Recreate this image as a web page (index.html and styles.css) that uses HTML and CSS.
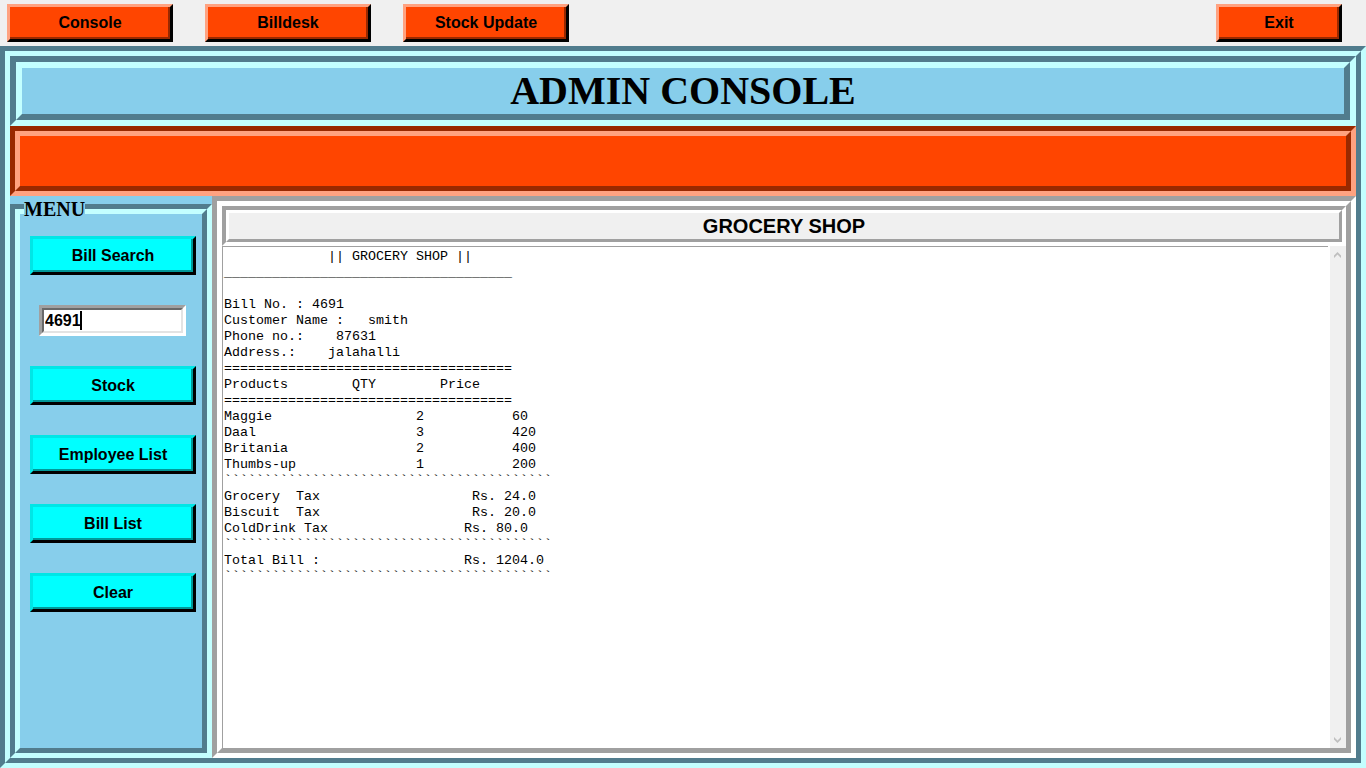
FILE: index.html
```html
<!DOCTYPE html>
<html lang="en">
<head>
<meta charset="utf-8">
<title>Admin Console</title>
<link rel="stylesheet" href="styles.css">
</head>
<body>
<nav class="topbar">
  <button type="button" class="btn orange">Console</button>
  <button type="button" class="btn orange">Billdesk</button>
  <button type="button" class="btn orange">Stock Update</button>
  <button type="button" class="btn orange exit">Exit</button>
</nav>
<main class="groove sky app"><div class="ridge app-inner">
  <header class="groove sky title"><h1 class="ridge title-text">ADMIN CONSOLE</h1></header>
  <div class="groove flame banner"><div class="ridge banner-inner"></div></div>
  <div class="work">
    <aside class="side">
      <div class="groove sky menu">
        <h2 class="legend">MENU</h2>
        <div class="ridge menu-inner">
          <button type="button" class="btn cyan">Bill Search</button>
          <div class="entry">
            <input class="entry-input" type="text" value="4691" aria-label="Bill number">
            <span class="caret"></span>
          </div>
          <button type="button" class="btn cyan">Stock</button>
          <button type="button" class="btn cyan">Employee List</button>
          <button type="button" class="btn cyan">Bill List</button>
          <button type="button" class="btn cyan">Clear</button>
        </div>
      </div>
    </aside>
    <section class="groove gray bill"><div class="ridge bill-inner">
      <div class="groove gray shop"><h2 class="ridge shop-text">GROCERY SHOP</h2></div>
      <div class="paper">
        <textarea class="receipt" aria-label="Bill" wrap="off" spellcheck="false">
             || GROCERY SHOP ||
____________________________________

Bill No. : 4691
Customer Name :   smith
Phone no.:    87631
Address.:    jalahalli
====================================
Products        QTY        Price
====================================
Maggie                  2           60
Daal                    3           420
Britania                2           400
Thumbs-up               1           200
&#96;&#96;&#96;&#96;&#96;&#96;&#96;&#96;&#96;&#96;&#96;&#96;&#96;&#96;&#96;&#96;&#96;&#96;&#96;&#96;&#96;&#96;&#96;&#96;&#96;&#96;&#96;&#96;&#96;&#96;&#96;&#96;&#96;&#96;&#96;&#96;&#96;&#96;&#96;&#96;&#96;
Grocery  Tax                   Rs. 24.0
Biscuit  Tax                   Rs. 20.0
ColdDrink Tax                 Rs. 80.0
&#96;&#96;&#96;&#96;&#96;&#96;&#96;&#96;&#96;&#96;&#96;&#96;&#96;&#96;&#96;&#96;&#96;&#96;&#96;&#96;&#96;&#96;&#96;&#96;&#96;&#96;&#96;&#96;&#96;&#96;&#96;&#96;&#96;&#96;&#96;&#96;&#96;&#96;&#96;&#96;&#96;
Total Bill :                  Rs. 1204.0
&#96;&#96;&#96;&#96;&#96;&#96;&#96;&#96;&#96;&#96;&#96;&#96;&#96;&#96;&#96;&#96;&#96;&#96;&#96;&#96;&#96;&#96;&#96;&#96;&#96;&#96;&#96;&#96;&#96;&#96;&#96;&#96;&#96;&#96;&#96;&#96;&#96;&#96;&#96;&#96;&#96;</textarea>
        <div class="scroll">
          <svg width="8" height="6" viewBox="0 0 8 6"><path d="M0 3.5 3.5 0 7 3.5V6L3.5 2.5 0 6z" fill="#bfbfbf"/></svg>
          <svg width="8" height="6" viewBox="0 0 8 6"><path d="M0 0 3.5 3.5 7 0V2.5L3.5 6 0 2.5z" fill="#bfbfbf"/></svg>
        </div>
      </div>
    </div></section>
  </div>
</div></main>
</body>
</html>
```
FILE: styles.css
```css
* { box-sizing: border-box; }
body {
  margin: 0;
  min-height: 100vh;
  display: flex;
  flex-direction: column;
  background: #f0f0f0;
  color: #000;
  font-family: "Liberation Sans", Arial, sans-serif;
}
h1, h2 { margin: 0; }

/* two-tone bevel: the outer box is sunken, the inner one raised */
.sky { --fill: #87ceeb; --dark: #517c8d; --light: #c3ffff; }
.flame { --fill: #ff4500; --dark: #992900; --light: #ffa280; }
.gray { --fill: #f0f0f0; --dark: #a0a0a0; --light: #fff; }
.groove {
  display: flex;
  flex-direction: column;
  border: 5px solid;
  border-color: var(--dark) var(--light) var(--light) var(--dark);
  background: var(--fill);
}
.ridge {
  flex: 1;
  border: 5px solid;
  border-color: var(--light) var(--dark) var(--dark) var(--light);
}

.topbar {
  display: flex;
  gap: 32px;
  padding: 4px 24px 4px 7px;
}
.btn {
  width: 166px;
  height: 39px;
  padding: 0;
  border: 3px solid;
  font: bold 16px/18px "Liberation Sans", Arial, sans-serif;
  color: #000;
}
.orange {
  height: 38px;
  background: #ff4500;
  border-color: #ffa280 #000 #000 #ffa280;
  box-shadow: inset -2px -2px #992900;
}
.cyan {
  background: #0ff;
  border-color: #00e6e6 #000 #000 #00e6e6;
  box-shadow: inset -2px -2px #009999;
}
.exit { width: 126px; margin-left: auto; }

.app { flex: 1; }
.app-inner { display: flex; flex-direction: column; }
.title, .title-text { border-width: 6px; }
.title-text {
  font: bold 40px/46px "Liberation Serif", "Times New Roman", serif;
  text-align: center;
}
.banner { height: 70px; }
.work { flex: 1; display: flex; }

.side { display: flex; width: 202px; padding-top: 8px; background: #87ceeb; }
.menu { position: relative; flex: 1; }
.menu-inner {
  display: flex;
  flex-direction: column;
  align-items: flex-start;
  gap: 30px;
  padding: 22px 0 0 10px;
}
.menu-inner .btn { margin-right: -4px; }
.legend {
  position: absolute;
  left: 9px;
  top: -11px;
  background: #87ceeb;
  font: bold 20px/22px "Liberation Serif", "Times New Roman", serif;
}
.entry {
  position: relative;
  width: 147px;
  height: 31px;
  margin-left: 9px;
  border: 3px solid;
  border-color: #a0a0a0 #fff #fff #a0a0a0;
}
.entry-input {
  display: block;
  width: 100%;
  height: 100%;
  padding: 0 1px;
  border: 2px solid;
  border-color: #696969 #e3e3e3 #e3e3e3 #696969;
  background: #fff;
  outline: none;
  font: bold 16px/18px "Liberation Sans", Arial, sans-serif;
  color: #000;
}
.caret {
  position: absolute;
  left: 38px;
  top: 3px;
  width: 2px;
  height: 19px;
  background: #000;
}

.bill { flex: 1; }
.bill-inner { display: flex; flex-direction: column; }
.shop { border-width: 4px; }
.shop-text {
  border-width: 3px;
  font: bold 20px/26px "Liberation Sans", Arial, sans-serif;
  text-align: center;
}
.paper { flex: 1; display: flex; background: #fff; }
.receipt {
  flex: 1;
  margin: 0 2px 0 0;
  padding: 2px 1px 1px;
  border: 0 solid #a0a0a0;
  border-width: 1px 0 0 1px;
  outline: none;
  resize: none;
  overflow: hidden;
  background: #fff;
  color: #000;
  font: 10pt/16px "Liberation Mono", "Courier New", monospace;
}
.scroll {
  display: flex;
  flex-direction: column;
  justify-content: space-between;
  align-items: center;
  width: 16px;
  padding: 6px 0 5px;
  background: #f0f0f0;
}
```
